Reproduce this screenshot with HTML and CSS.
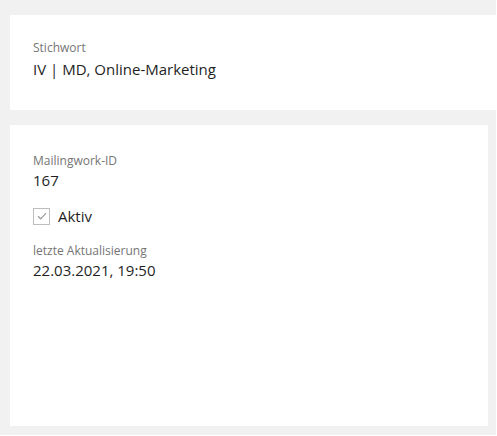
FILE: index.html
```html
<!DOCTYPE html>
<html lang="de">
<head>
<meta charset="utf-8">
<title>Mailing</title>
<link rel="stylesheet" href="styles.css">
</head>
<body>
<div class="page">
  <section class="card card-top">
    <div class="label">Stichwort</div>
    <div class="value">IV | MD, Online-Marketing</div>
  </section>
  <section class="card card-main">
    <div class="label">Mailingwork-ID</div>
    <div class="value value-tight">167</div>
    <div class="check-row">
      <span class="checkbox">
        <svg width="10" height="8" viewBox="0 0 10 8"><path d="M1 4.2 L3.7 6.8 L9 1.2" fill="none" stroke="#9a9a9a" stroke-width="1.2"/></svg>
      </span>
      <span class="check-label">Aktiv</span>
    </div>
    <div class="label label-gap">letzte Aktualisierung</div>
    <div class="value value-tight">22.03.2021, 19:50</div>
  </section>
</div>
</body>
</html>
```
FILE: styles.css
```css
html, body {
  margin: 0;
  padding: 0;
  background: #ffffff;
}
body {
  font-family: "Open Sans", "Noto Sans", sans-serif;
  overflow: hidden;
}
.page {
  width: 496px;
  height: 435px;
  box-sizing: border-box;
  background: #f1f1f1;
  padding: 15px 8px 9px 10px;
  display: flex;
  flex-direction: column;
  gap: 15px;
}
.card {
  background: #ffffff;
  box-sizing: border-box;
  padding-left: 23px;
}
.card-top {
  height: 95px;
  margin-right: -8px;
  padding-top: 25px;
}
.card-main {
  flex: 1;
  padding-top: 28px;
}
.label {
  font-size: 12px;
  line-height: 16px;
  color: #757575;
}
.value {
  font-size: 15px;
  line-height: 20px;
  color: #1f1f1f;
  margin-top: 3px;
}
.value-tight {
  margin-top: 1px;
}
.check-row {
  display: flex;
  align-items: center;
  gap: 8px;
  margin-top: 16px;
  height: 20px;
}
.checkbox {
  width: 15px;
  height: 15px;
  border: 1px solid #bdbdbd;
  display: flex;
  align-items: center;
  justify-content: center;
}
.check-label {
  font-size: 15px;
  line-height: 20px;
  color: #1f1f1f;
}
.label-gap {
  margin-top: 17px;
}
```
